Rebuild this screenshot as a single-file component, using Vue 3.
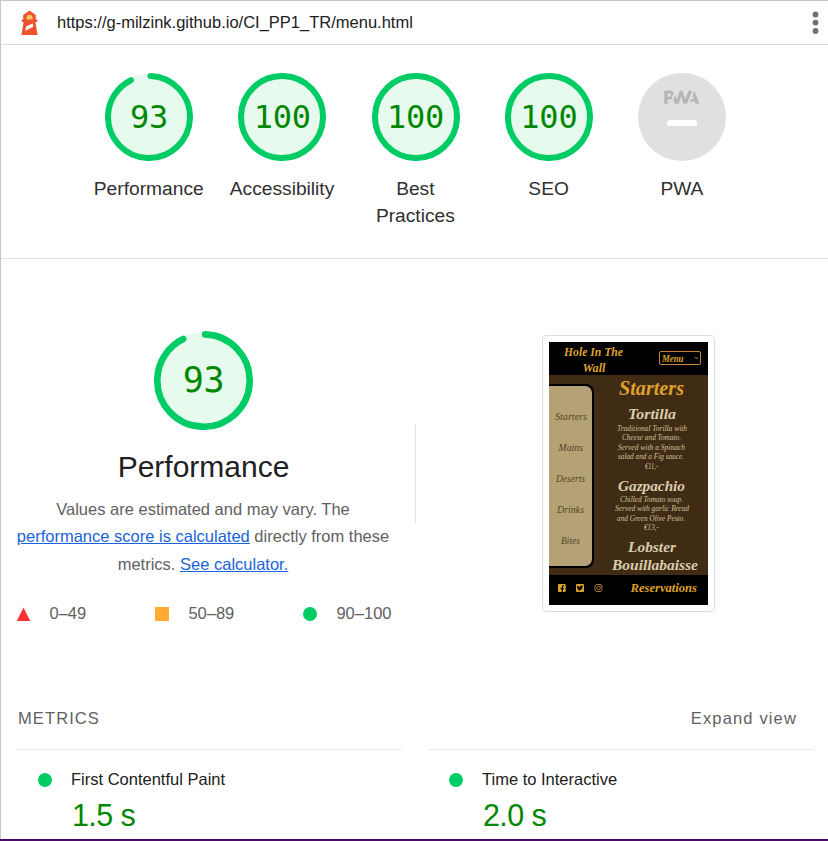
<script setup>
const gauges = [
  { label: 'Performance', score: 93 },
  { label: 'Accessibility', score: 100 },
  { label: 'Best Practices', score: 100 },
  { label: 'SEO', score: 100 }
]
const arc = (score) => (score === 100 ? '360 0' : `${score * 3.6 - 3} 360`)

const metrics = [
  { name: 'First Contentful Paint', value: '1.5 s' },
  { name: 'Time to Interactive', value: '2.0 s' }
]

const nav = [
  { t: 'Starters', y: 77.5, x: 6, w: 32 },
  { t: 'Mains', y: 108.5, x: 9.5, w: 24.5 },
  { t: 'Deserts', y: 140, x: 7, w: 29 },
  { t: 'Drinks', y: 171, x: 8, w: 27 },
  { t: 'Bites', y: 202, x: 12, w: 19 }
]
const lines = [
  { t: 'Traditional Torilla with', y: 88.5, x: 68, w: 70 },
  { t: 'Cheese and Tomato.', y: 98, x: 73, w: 59 },
  { t: 'Served with a Spinach', y: 107.5, x: 69, w: 67 },
  { t: 'salad and a Fig sauce.', y: 117, x: 69, w: 66 },
  { t: '€11,-', y: 126.5, x: 96, w: 13 },
  { t: 'Chilled Tomato soup.', y: 159.5, x: 71, w: 63 },
  { t: 'Served with garlic Bread', y: 169, x: 66, w: 74 },
  { t: 'and Green Olive Pesto.', y: 178.5, x: 68, w: 68 },
  { t: '€13,-', y: 188, x: 95, w: 15 }
]
const dishes = [
  { t: 'Tortilla', y: 77, x: 79, w: 48 },
  { t: 'Gazpachio', y: 148.5, x: 69, w: 67 },
  { t: 'Lobster', y: 209.5, x: 79, w: 48 },
  { t: 'Bouillabaisse', y: 228, x: 63, w: 86 }
]
</script>

<template>
  <div class="page">
    <div class="report">
      <header class="topbar">
        <svg class="lighthouse" width="19" height="26" viewBox="0 0 19 26">
          <path d="M3.2 5 9.500.500l6.300 4.500v4.400h1.500v2.600h-1.900L17.600 25H1.400l2.200-13H1.700V9.400h1.500z" fill="#ee5330" />
          <path d="M6.600 9.400V7.200a3 3 0 0 1 5.900 0v2.200z" fill="#fbc568" />
          <path d="m6 16.500 6.800-3 .5 3.300-7.900 4z" fill="#fff" />
        </svg>
        <span class="url">https://g-milzink.github.io/CI_PP1_TR/menu.html</span>
        <svg class="kebab" width="8" height="24" viewBox="0 0 8 24" fill="#707070">
          <circle cx="3.500" cy="3.500" r="2.900" /><circle cx="3.500" cy="11.600" r="2.900" /><circle cx="3.500" cy="20" r="2.900" />
        </svg>
      </header>

      <section class="scores">
        <div v-for="g in gauges" :key="g.label" class="gauge">
          <div class="dial">
            <svg viewBox="0 0 88 88">
              <circle class="fill" cx="44" cy="44" r="43" />
              <circle class="arc" cx="44" cy="44" r="41" stroke-width="6" pathLength="360" :stroke-dasharray="arc(g.score)" transform="rotate(-88 44 44)" />
            </svg>
            <span class="score">{{ g.score }}</span>
          </div>
          <div class="label">{{ g.label }}</div>
        </div>
        <div class="gauge">
          <div class="dial">
            <svg viewBox="0 0 88 88">
              <circle cx="44" cy="44" r="44" fill="#e0e0e0" />
              <g fill="#b5b5b5" transform="translate(0 .2) scale(1.46)">
                <path d="m35.660 19.390.7-1.750h2L37.400 15l1.200-3 3.400 9h-2.510l-.58-1.610z" />
                <path d="m33.520 21 3.650-9h-2.420l-2.500 5.820L30.500 12h-1.860l-1.900 5.820-1.350-2.650-1.210 3.720L25.400 21h2.380l1.720-5.200 1.640 5.200z" />
                <path fill-rule="evenodd" d="M20.300 17.910h1.480c.45 0 .85-.05 1.200-.15l.39-1.180 1.070-3.300a2.640 2.640 0 0 0-.28-.37c-.55-.6-1.360-.91-2.420-.91H18v9h2.300zm1.960-3.840c.22.22.33.5.33.87 0 .36-.1.65-.29.87-.2.23-.59.35-1.150.35h-.86v-2.410h.87c.52 0 .89.1 1.100.32z" />
              </g>
              <rect x="29" y="47" width="30" height="6" rx="2.500" fill="#fff" />
            </svg>
          </div>
          <div class="label">PWA</div>
        </div>
      </section>

      <section class="overview">
        <div class="summary">
          <div class="dial big">
            <svg viewBox="0 0 99 99">
              <circle class="fill" cx="49.5" cy="49.5" r="48.5" />
              <circle class="arc" cx="49.5" cy="49.5" r="46.2" stroke-width="6.6" pathLength="360" :stroke-dasharray="arc(93)" transform="rotate(-88 49.5 49.5)" />
            </svg>
            <span class="score">93</span>
          </div>
          <h1>Performance</h1>
          <p>
            Values are estimated and may vary. The<br />
            <a>performance score is calculated</a> directly from these<br />
            metrics. <a>See calculator.</a>
          </p>
          <div class="legend">
            <span class="range"><i class="tri"></i>0–49</span>
            <span class="range"><i class="sq"></i>50–89</span>
            <span class="range"><i class="dot"></i>90–100</span>
          </div>
        </div>
        <div class="rule"></div>
        <div class="frame">
          <svg class="shot" width="159" height="263" viewBox="0 0 159 263">
            <rect width="159" height="263" fill="#000" />
            <rect y="33" width="159" height="200" fill="#402b14" />
            <path d="M0 42h37a8 8 0 0 1 8 8v168a8 8 0 0 1-8 8H0z" fill="#000" />
            <path d="M0 44h36a7 7 0 0 1 7 7v166a7 7 0 0 1-7 7H0z" fill="#b4a276" />
            <g class="gold">
              <text x="15" y="14" font-size="12.500" textLength="59" lengthAdjust="spacingAndGlyphs">Hole In The</text>
              <text x="33.500" y="29.500" font-size="12.500" textLength="23" lengthAdjust="spacingAndGlyphs">Wall</text>
              <text x="113" y="20" font-size="9.500" textLength="21.500" lengthAdjust="spacingAndGlyphs">Menu</text>
              <text x="70" y="53" font-size="20" textLength="65" lengthAdjust="spacingAndGlyphs">Starters</text>
              <text x="81.500" y="250" font-size="12.500" textLength="66.500" lengthAdjust="spacingAndGlyphs">Reservations</text>
            </g>
            <rect x="110.500" y="9.500" width="41" height="13" rx="1.500" fill="none" stroke="#c98736" />
            <path d="m145.500 15 1.800 1.800 1.800-1.800" fill="none" stroke="#aaa" stroke-width=".8" />
            <text v-for="n in nav" :key="n.t" class="nav" :x="n.x" :y="n.y" :textLength="n.w" lengthAdjust="spacingAndGlyphs">{{ n.t }}</text>
            <text v-for="d in dishes" :key="d.t" class="dish" :x="d.x" :y="d.y" :textLength="d.w" lengthAdjust="spacingAndGlyphs">{{ d.t }}</text>
            <text v-for="l in lines" :key="l.t" class="line" :x="l.x" :y="l.y" :textLength="l.w" lengthAdjust="spacingAndGlyphs">{{ l.t }}</text>
            <rect x="9" y="242" width="7.700" height="8" rx="1" fill="#daa32e" />
            <path d="M13.300 250v-5.300q0-1.200 1.700-1.200M11.500 246.600h3.300" fill="none" stroke="#000" stroke-width="1.200" />
            <rect x="27" y="242" width="8" height="8" rx="1" fill="#daa32e" />
            <path d="M28.300 243.600q1.200 1.400 2.700 1.400c0-1.700 1.600-1.900 2.200-1.200l1-.3-.7 1.100c0 3.500-3.200 4.700-5.300 3.500q1 0 1.600-.6-1.200-.3-1.300-1.100-.7-1-.2-2.800" fill="#000" />
            <g fill="none" stroke="#a87932" stroke-width="1">
              <rect x="46" y="242.500" width="7" height="7" rx="2" /><circle cx="49.500" cy="246" r="1.800" />
            </g>
            <circle cx="51.500" cy="244" r=".5" fill="#a87932" />
          </svg>
        </div>
      </section>

      <section class="metrics">
        <div class="metrics-head"><span class="title">METRICS</span><span class="expand">Expand view</span></div>
        <div class="grid">
          <div v-for="m in metrics" :key="m.name" class="metric">
            <i class="dot"></i>
            <div>
              <div class="name">{{ m.name }}</div>
              <div class="value">{{ m.value }}</div>
            </div>
          </div>
        </div>
      </section>
    </div>
  </div>
</template>

<style>
body { background: #fff; overflow: hidden; }
</style>

<style scoped>
.page { width: 828px; border-bottom: 2px solid #4b0a69; }
.report {
  box-sizing: border-box;
  height: 839px;
  display: flex;
  flex-direction: column;
  overflow: hidden;
  border-top: 1px solid #c8c8c8;
  border-left: 1px solid #c8c8c8;
  font-family: "Liberation Sans", Arial, sans-serif;
  font-size: 16.5px;
  color: #212121;
}
.topbar {
  box-sizing: border-box;
  height: 44px;
  flex: none;
  display: flex;
  align-items: center;
  padding: 0 8px 0 19px;
  border-bottom: 1px solid #dedede;
}
.lighthouse { margin-right: 18px; }
.url { flex: 1; }
.kebab { display: block; }
.scores {
  box-sizing: border-box;
  height: 214px;
  flex: none;
  display: grid;
  grid-template-columns: repeat(5, 133.3px);
  justify-content: center;
  padding-top: 28px;
  padding-left: 2.2px;
  border-bottom: 1px solid #e0e0e0;
}
.gauge { display: flex; flex-direction: column; align-items: center; }
.dial { display: grid; place-items: center; width: 88px; height: 88px; }
.dial > * { grid-area: 1 / 1; }
.dial svg { width: 100%; height: 100%; display: block; }
.fill { fill: #e6faee; }
.arc { fill: none; stroke: #0c6; stroke-linecap: round; }
.score { font: 32px/40px "DejaVu Sans Mono", monospace; letter-spacing: -0.2px; color: #080; }
.label {
  width: 113px;
  margin-top: 14px;
  padding-right: 0.5px;
  text-align: center;
  font-size: 19.2px;
  line-height: 27px;
  color: #303030;
}
.overview { height: 438px; flex: none; display: flex; }
.summary { width: 405px; display: flex; flex-direction: column; align-items: center; padding-top: 72px; }
.big { width: 99px; height: 99px; }
.big .score { font-size: 35px; padding-bottom: 2px; }
h1 { margin: 17px 0 0; font-size: 30px; line-height: 40px; font-weight: 400; }
p { margin: 8.6px 1px 0 0; text-align: center; line-height: 27.5px; color: #616161; white-space: nowrap; }
a { color: #1a63d8; text-decoration: underline; }
.legend { width: 375px; margin: 25.4px 0 0 1px; display: flex; justify-content: space-between; color: #616161; line-height: 20px; }
.range { display: flex; align-items: center; }
.range i { margin: 2px 19px 0 0; }
.tri { width: 14px; height: 14px; background: #f33; clip-path: polygon(50% 0, 100% 100%, 0 100%); }
.sq { width: 14px; height: 14px; background: #fa3; }
.dot { width: 14px; height: 14px; border-radius: 50%; background: #0c6; }
.rule { width: 1px; height: 99px; margin: 165px 0 0 9px; background: #e0e0e0; }
.frame {
  box-sizing: border-box;
  width: 173px;
  height: 277px;
  margin: 76px 0 0 126px;
  padding: 6px;
  border: 1px solid #dedede;
  border-radius: 4px;
}
.shot { display: block; font-family: "Liberation Serif", serif; font-style: italic; }
.gold { fill: #dfa12c; font-weight: 700; }
.nav { fill: #554325; font-size: 10px; }
.dish { fill: #dacdad; font-size: 15px; font-weight: 700; }
.line { fill: #d0c09b; font-size: 7.8px; }
.metrics { padding: 0 15px 0 17px; }
.metrics-head { display: flex; justify-content: space-between; padding: 11px 16px 0 0; height: 41px; line-height: 20px; color: #616161; }
.title { letter-spacing: 1.1px; }
.expand { letter-spacing: 1.15px; }
.grid { display: grid; grid-template-columns: 384px 384px; column-gap: 27px; }
.metric { display: flex; border-top: 1px solid #e8e8e8; padding: 19px 0 0 20px; }
.metric .dot { margin: 4px 19px 0 0; }
.name { line-height: 20px; }
.value { margin: 8px 0 0 1px; font-size: 30.5px; line-height: 36px; letter-spacing: -0.6px; color: #080; }
</style>
